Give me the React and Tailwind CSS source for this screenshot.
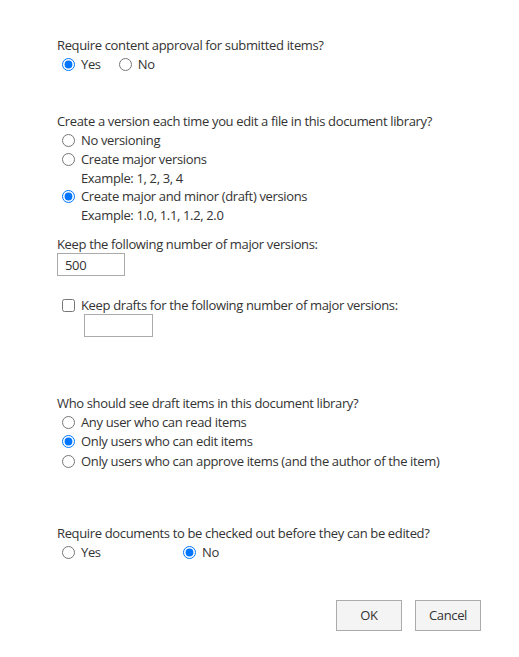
import { useState } from "react";

// Library settings form: approval, versioning, draft security, checkout
const font = { fontFamily: '"Open Sans", "Noto Sans", sans-serif' };

const Radio = ({ name, checked, label, className = "" }) => (
  <label className={`flex items-center h-[19px] ${className}`}>
    <input
      type="radio"
      name={name}
      defaultChecked={checked}
      className="m-0 ml-[5px] w-[13px] h-[13px] accent-[#0075ff]"
    />
    <span className="ml-[6px]">{label}</span>
  </label>
);

const Example = ({ children, className = "" }) => (
  <div className={`pl-[24px] h-[18px] leading-[18px] ${className}`}>{children}</div>
);

export default function App() {
  const [major, setMajor] = useState("500");

  return (
    <div className="min-h-[657px] bg-white text-[#333] text-[13px] tracking-[-0.35px] leading-[19px] px-[57px] pt-[36px]" style={font}>
      {/* Content approval */}
      <div>Require content approval for submitted items?</div>
      <div className="flex h-[19px] items-center">
        <Radio name="approval" checked label="Yes" />
        <Radio name="approval" label="No" className="ml-[13px]" />
      </div>

      {/* Versioning */}
      <div className="mt-[38px]">Create a version each time you edit a file in this document library?</div>
      <Radio name="version" label="No versioning" />
      <Radio name="version" label="Create major versions" />
      <Example>Example: 1, 2, 3, 4</Example>
      <Radio name="version" checked label="Create major and minor (draft) versions" className="h-[18px]" />
      <Example className="h-[16px] leading-[16px]">Example: 1.0, 1.1, 1.2, 2.0</Example>

      <div className="mt-[12px] leading-[17px]">Keep the following number of major versions:</div>
      <input
        value={major}
        onChange={(e) => setMajor(e.target.value)}
        className="block w-[68px] h-[23px] border border-[#ababab] px-[7px] text-[13px] text-[#333] outline-none"
        style={font}
      />

      <label className="flex items-center mt-[20px] h-[19px]">
        <input type="checkbox" className="m-0 ml-[5px] w-[13px] h-[13px]" />
        <span className="ml-[6px]">Keep drafts for the following number of major versions:</span>
      </label>
      <input className="block ml-[27px] mt-[-1px] w-[69px] h-[23px] border border-[#ababab] outline-none" />

      {/* Draft item security */}
      <div className="mt-[57px]">Who should see draft items in this document library?</div>
      <Radio name="draft" label="Any user who can read items" />
      <Radio name="draft" checked label="Only users who can edit items" />
      <Radio name="draft" label="Only users who can approve items (and the author of the item)" className="h-[20px]" />

      {/* Require check out */}
      <div className="mt-[53px]">Require documents to be checked out before they can be edited?</div>
      <div className="flex h-[19px] items-center">
        <Radio name="checkout" label="Yes" className="w-[121px]" />
        <Radio name="checkout" checked label="No" />
      </div>

      <div className="flex justify-end gap-[13px] mt-[38px] mr-[-19px]">
        <button className="w-[66px] h-[31px] bg-[#f4f4f4] border border-[#ababab] text-[#333] text-[13px]" style={font}>OK</button>
        <button className="w-[66px] h-[31px] bg-[#f4f4f4] border border-[#ababab] text-[#333] text-[13px]" style={font}>Cancel</button>
      </div>
    </div>
  );
}
